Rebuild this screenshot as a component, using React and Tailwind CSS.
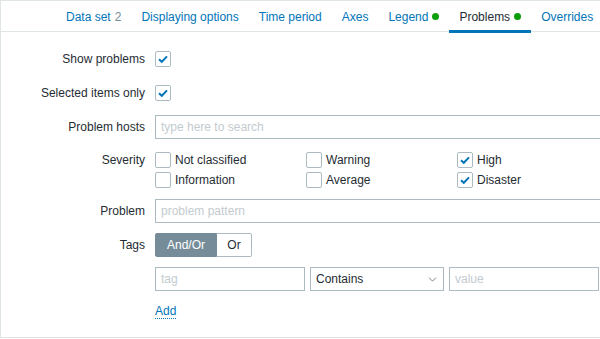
import { ChevronDown } from 'lucide-react'

const tabs = [
  { label: 'Data set', count: 2 },
  { label: 'Displaying options' },
  { label: 'Time period' },
  { label: 'Axes' },
  { label: 'Legend', dot: true },
  { label: 'Problems', dot: true, active: true },
  { label: 'Overrides' },
]

const severities = [
  ['Not classified', false],
  ['Warning', false],
  ['High', true],
  ['Information', false],
  ['Average', false],
  ['Disaster', true],
]

function Checkbox({ checked }) {
  return (
    <span className="w-4 h-4 shrink-0 rounded-[2px] border border-[#acbbc2] bg-white flex items-center justify-center">
      {checked && (
        <svg width="12" height="12" viewBox="0 0 12 12" fill="none">
          <path d="M2 6.2 L4.8 8.8 L10 3.4" stroke="#0275b8" strokeWidth="2" />
        </svg>
      )}
    </span>
  )
}

function Label({ children, tall }) {
  return (
    <div className={`text-right ${tall ? 'leading-5 h-5 mt-[1px]' : 'h-6 flex items-center justify-end'}`}>
      {children}
    </div>
  )
}

function TextInput({ placeholder, className }) {
  return (
    <div className={`h-6 border border-[#acbbc2] bg-white pl-[5px] flex items-center text-[#c3cbd0] ${className}`}>
      {placeholder}
    </div>
  )
}

export default function App() {
  return (
    <div className="w-[600px] h-[339px] overflow-hidden bg-white font-['Liberation_Sans',Arial,sans-serif] text-[12px] text-[#1f2c33]">
      <div className="h-[338px] border-l border-t border-b border-[#dfe4e7] flex flex-col">
        <div className="h-[31px] shrink-0 border-b border-[#dfe4e7] flex pl-[55px]">
          {tabs.map(t => (
            <div
              key={t.label}
              className={`relative h-[31px] px-[10px] flex items-center gap-[4px] whitespace-nowrap ${t.active ? 'text-[#1f2c33]' : 'text-[#0275b8]'}`}
            >
              <span>{t.label}</span>
              {t.count && <span className="text-[#768d99]">{t.count}</span>}
              {t.dot && <span className="w-[7px] h-[7px] rounded-full bg-[#0a9e0a]" />}
              {t.active && <span className="absolute left-0 right-0 bottom-[-1px] h-[3px] bg-[#0275b8]" />}
            </div>
          ))}
        </div>

        <div className="pt-[15px] grid grid-cols-[144px_1fr] gap-x-[10px] gap-y-[10px]">
          <Label>Show problems</Label>
          <div className="h-6 flex items-center"><Checkbox checked /></div>

          <Label>Selected items only</Label>
          <div className="h-6 flex items-center"><Checkbox checked /></div>

          <Label>Problem hosts</Label>
          <TextInput placeholder="type here to search" className="w-[460px]" />

          <Label tall>Severity</Label>
          <div className="h-10 pt-[1px] grid grid-cols-[151px_151px_151px] content-start">
            {severities.map(([name, on]) => (
              <div key={name} className="h-5 flex items-center gap-[4px]">
                <Checkbox checked={on} />
                <span>{name}</span>
              </div>
            ))}
          </div>

          <Label>Problem</Label>
          <TextInput placeholder="problem pattern" className="w-[460px]" />

          <Label>Tags</Label>
          <div className="flex h-6">
            <div className="w-[62px] bg-[#768d99] border border-[#768d99] text-white rounded-l-[2px] flex items-center justify-center">
              And/Or
            </div>
            <div className="w-[35px] bg-white border border-l-0 border-[#acbbc2] rounded-r-[2px] flex items-center justify-center">
              Or
            </div>
          </div>

          <div />
          <div className="flex gap-[5px]">
            <TextInput placeholder="tag" className="w-[150px]" />
            <div className="w-[134px] h-6 border border-[#acbbc2] bg-white pl-[5px] pr-[4px] flex items-center justify-between">
              <span>Contains</span>
              <ChevronDown size={13} strokeWidth={1.5} className="text-[#5b6770]" />
            </div>
            <TextInput placeholder="value" className="w-[150px]" />
          </div>

          <div />
          <div className="h-5 flex items-center">
            <span className="text-[#0275b8] leading-[14px] border-b border-dotted border-[#0275b8]">Add</span>
          </div>
        </div>
      </div>
    </div>
  )
}
